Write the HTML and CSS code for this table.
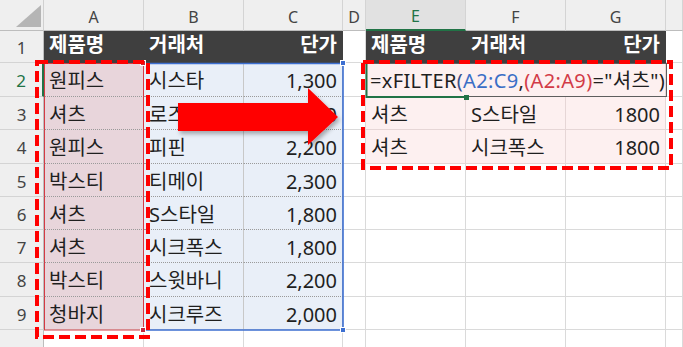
FILE: index.html
```html
<!DOCTYPE html>
<html lang="ko">
<head>
<meta charset="utf-8">
<title>xFILTER</title>
<link rel="stylesheet" href="styles.css">
</head>
<body>
<div class="sheet">
  <div class="grid">
    <div class="corner"><span class="tri"></span></div>
    <div class="ch">A</div><div class="ch">B</div><div class="ch">C</div><div class="ch">D</div>
    <div class="ch active">E</div><div class="ch">F</div><div class="ch">G</div><div class="ch"></div>

    <div class="rh">1</div>
    <div class="c hd">제품명</div><div class="c hd">거래처</div><div class="c hd num">단가</div>
    <div class="c"></div>
    <div class="c hd">제품명</div><div class="c hd">거래처</div><div class="c hd num">단가</div>
    <div class="c"></div>

    <div class="rh active">2</div>
    <div class="c sa">원피스</div><div class="c sb">시스타</div><div class="c sb num">1,300</div>
    <div class="c"></div>
    <div class="c res formula">=xFILTER<span class="k1">(</span><span class="rb">A2:C9</span>,<span class="rr">(A2:A9)</span>="셔츠")</div>
    <div class="c"></div>

    <div class="rh">3</div>
    <div class="c sa">셔츠</div><div class="c sb">로즈핀</div><div class="c sb num">1,500</div>
    <div class="c"></div>
    <div class="c res">셔츠</div><div class="c res">S스타일</div><div class="c res num">1800</div>
    <div class="c"></div>

    <div class="rh">4</div>
    <div class="c sa">원피스</div><div class="c sb">피핀</div><div class="c sb num">2,200</div>
    <div class="c"></div>
    <div class="c res">셔츠</div><div class="c res">시크폭스</div><div class="c res num">1800</div>
    <div class="c"></div>

    <div class="rh">5</div>
    <div class="c sa">박스티</div><div class="c sb">티메이</div><div class="c sb num">2,300</div>
    <div class="c"></div><div class="c"></div><div class="c"></div><div class="c"></div><div class="c"></div>

    <div class="rh">6</div>
    <div class="c sa">셔츠</div><div class="c sb">S스타일</div><div class="c sb num">1,800</div>
    <div class="c"></div><div class="c"></div><div class="c"></div><div class="c"></div><div class="c"></div>

    <div class="rh">7</div>
    <div class="c sa">셔츠</div><div class="c sb">시크폭스</div><div class="c sb num">1,800</div>
    <div class="c"></div><div class="c"></div><div class="c"></div><div class="c"></div><div class="c"></div>

    <div class="rh">8</div>
    <div class="c sa">박스티</div><div class="c sb">스윗바니</div><div class="c sb num">2,200</div>
    <div class="c"></div><div class="c"></div><div class="c"></div><div class="c"></div><div class="c"></div>

    <div class="rh">9</div>
    <div class="c sa last">청바지</div><div class="c sb last">시크루즈</div><div class="c sb num last">2,000</div>
    <div class="c"></div><div class="c"></div><div class="c"></div><div class="c"></div><div class="c"></div>

    <div class="rh tail"></div>
    <div class="c"></div><div class="c"></div><div class="c"></div><div class="c"></div>
    <div class="c"></div><div class="c"></div><div class="c"></div><div class="c"></div>
  </div>

  <svg class="marks" width="683" height="347" viewBox="0 0 683 347" aria-hidden="true">
    <defs>
      <filter id="shadow" x="-20%" y="-30%" width="150%" height="170%">
        <feDropShadow dx="2" dy="3" stdDeviation="2" flood-color="#000" flood-opacity="0.3"/>
      </filter>
    </defs>
    <path d="M144 63.5 H343 V330 H144" fill="none" stroke="#3c6fd1" stroke-width="1.6"/>
    <rect x="44.5" y="63.5" width="99" height="266.5" fill="none" stroke="#d43a44" stroke-width="1"/>
    <rect x="340.5" y="60.5" width="5" height="5" fill="#3c6fd1" stroke="#fff" stroke-width="1"/>
    <rect x="340.5" y="327.5" width="5" height="5" fill="#3c6fd1" stroke="#fff" stroke-width="1"/>
    <rect x="140.5" y="60.5" width="5" height="5" fill="#c8283c" stroke="#fff" stroke-width="1"/>
    <rect x="140.5" y="327.5" width="5" height="5" fill="#c8283c" stroke="#fff" stroke-width="1"/>
    <rect x="366.5" y="63.5" width="300" height="33" fill="none" stroke="#5e5e5e" stroke-width="1"/>
    <path d="M366.5 63 V97 H466" fill="none" stroke="#217346" stroke-width="2"/>
    <rect x="464" y="95" width="5" height="5" fill="#217346"/>
    <rect x="37" y="62" width="111" height="275" fill="none" stroke="#ff0000" stroke-width="4" stroke-dasharray="11 5"/>
    <rect x="363" y="62" width="308" height="106" fill="none" stroke="#ff0000" stroke-width="4" stroke-dasharray="11 5"/>
    <polygon points="178,103 308,103 308,88 338,117 308,145 308,131 178,131" fill="#ff0000" filter="url(#shadow)"/>
  </svg>
</div>
</body>
</html>
```

FILE: styles.css
```css
* {
  box-sizing: border-box;
  margin: 0;
  padding: 0;
}

html,
body {
  width: 683px;
  height: 347px;
  overflow: hidden;
  background: #ffffff;
}

body {
  font-family: "Noto Sans", "Noto Sans CJK KR", sans-serif;
  color: #1f1f1f;
}

.sheet {
  position: relative;
  width: 683px;
  height: 347px;
  overflow: hidden;
}

.grid {
  display: grid;
  grid-template-columns: 44px 100px 100px 99px 23px 100px 100px 100px 17px;
  grid-template-rows: 31px 32px 34px 33px 34px 33px 33px 33px 34px 33px 33px;
}

.corner {
  background: #efefef;
  border-right: 1px solid #d0d0d0;
  border-bottom: 1px solid #bdbdbd;
  display: flex;
  justify-content: flex-end;
  align-items: flex-end;
  padding: 0 2px 3px 0;
}

.tri {
  width: 25px;
  height: 22px;
  background: #b5b5b5;
  clip-path: polygon(100% 0, 100% 100%, 0 100%);
}

.ch {
  background: #efefef;
  border-right: 1px solid #d4d4d4;
  border-bottom: 1px solid #bdbdbd;
  color: #444444;
  font-size: 16px;
  display: flex;
  justify-content: center;
  align-items: center;
  padding-top: 3px;
}

.ch.active {
  background: #e1e1e1;
  color: #217346;
  border-bottom: 2px solid #217346;
}

.rh {
  background: #efefef;
  border-right: 1px solid #bdbdbd;
  border-bottom: 1px solid #d4d4d4;
  color: #444444;
  font-size: 17px;
  display: flex;
  justify-content: center;
  align-items: center;
  padding-top: 2px;
}

.rh.active {
  color: #217346;
  border-right: 2px solid #217346;
}

.c {
  border-right: 1px solid #dadada;
  border-bottom: 1px solid #dadada;
  font-size: 20px;
  line-height: 1;
  display: flex;
  align-items: center;
  padding: 3px 4px 0 5px;
  white-space: nowrap;
  min-width: 0;
}

.num {
  justify-content: flex-end;
  padding-right: 5px;
}

.hd {
  background: #3f3f3f;
  border-color: #3f3f3f;
  color: #ffffff;
  font-weight: 700;
  padding-top: 0;
  padding-bottom: 4px;
}

.sa {
  background: #e8d5db;
  border-bottom: 1px dotted #9a9a9a;
}

.sb {
  background: #e9eff8;
  border-bottom: 1px dotted #9a9a9a;
  border-right-color: #c8c8c8;
}

.last {
  border-bottom: 1px solid #dadada;
}

.res {
  background: #fdf0f0;
  border-color: #e6d6d6;
}

.formula {
  grid-column: span 3;
  padding-left: 4px;
  letter-spacing: 0.35px;
}

.rb {
  color: #3a6ec6;
}

.rr {
  color: #d23b47;
}

.k1 {
  color: #3a4f8a;
}

.marks {
  position: absolute;
  left: 0;
  top: 0;
  pointer-events: none;
}
```
